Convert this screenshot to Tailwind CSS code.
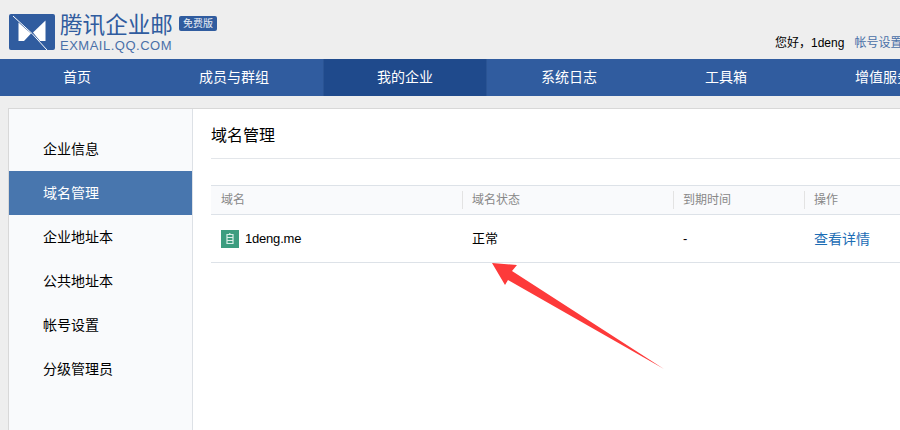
<!DOCTYPE html>
<html lang="zh">
<head>
<meta charset="utf-8">
<script src="https://cdn.jsdelivr.net/npm/@tailwindcss/browser@4"></script>
</head>
<body class="relative w-[900px] h-[430px] overflow-hidden bg-[#eeeeee] font-['Liberation_Sans','Noto_Sans_CJK_SC',sans-serif] text-black">
<header class="h-[59px] flex justify-between relative">
  <div class="flex pl-[9px] pt-[14px] items-start">
    <svg width="46" height="36" viewBox="0 0 46 36" class="shrink-0">
      <rect width="46" height="36" rx="2" fill="#305c9f"/>
      <path d="M9.500 8.500 L22 19.500 L15 27 L9.500 27 Z" fill="#fff"/>
      <path d="M36.500 6.500 L36.500 27 L31 27 L24 18.500 Z" fill="#fff"/>
      <path d="M4 2 L23 19.500 L38 36" fill="none" stroke="#fff" stroke-width="1"/>
    </svg>
    <div class="ml-[5px] flex flex-col -mt-[2px]">
      <div class="text-[#305c9f] text-[22.600px] leading-[27px] font-normal whitespace-nowrap">腾讯企业邮</div>
      <div class="text-[#4a70a8] text-[13px] leading-[14px] tracking-[0.5px] whitespace-nowrap">EXMAIL.QQ.COM</div>
    </div>
    <div class="ml-[6px] mt-[2px] w-[38px] h-[15px] rounded-[2px] bg-[#305c9f] text-[#e8eef6] text-[10px] leading-[15px] text-center whitespace-nowrap">免费版</div>
  </div>
  <div class="absolute left-[775px] top-[35px] text-[12px] leading-[16px] whitespace-nowrap flex">
    <span>您好，1deng</span><span class="ml-[10px] text-[#4a70a8]">帐号设置</span>
  </div>
</header>
<nav class="h-[37px] bg-[#305c9f] flex pl-[9px] text-white text-[14px] leading-[37px] whitespace-nowrap">
  <a class="px-[54px]">首页</a>
  <a class="px-[54px]">成员与群组</a>
  <a class="px-[53px] bg-[#1f4a8c] border-x border-[#2a5494]">我的企业</a>
  <a class="px-[54px]">系统日志</a>
  <a class="px-[54px]">工具箱</a>
  <a class="px-[54px]">增值服务</a>
</nav>
<main class="mt-[12px] ml-[8px] w-[900px] h-[330px] flex bg-white border border-[#d8d8d8]">
  <aside class="w-[184px] shrink-0 bg-[#f9fafc] border-r border-[#dde1e6] pt-[18px] text-[14px] leading-[44px]">
    <div class="pl-[34px] h-[44px]">企业信息</div>
    <div class="pl-[34px] h-[44px] bg-[#4876ae] text-white">域名管理</div>
    <div class="pl-[34px] h-[44px]">企业地址本</div>
    <div class="pl-[34px] h-[44px]">公共地址本</div>
    <div class="pl-[34px] h-[44px]">帐号设置</div>
    <div class="pl-[34px] h-[44px]">分级管理员</div>
  </aside>
  <section class="flex-1 pl-[18px]">
    <h1 class="h-[50px] border-b border-[#e3e6ea] text-[16px] leading-[54px] font-normal">域名管理</h1>
    <div class="mt-[26px] grid grid-cols-[251px_211px_131px_200px] h-[30px] bg-[#f9fafc] border-y border-[#dde2e8] text-[12px] text-[#888888] items-center">
      <div class="pl-[10px] leading-[18px]">域名</div>
      <div class="pl-[9px] leading-[18px] border-l border-[#e3e3e3]">域名状态</div>
      <div class="pl-[9px] leading-[18px] border-l border-[#e3e3e3]">到期时间</div>
      <div class="pl-[9px] leading-[18px] border-l border-[#e3e3e3]">操作</div>
    </div>
    <div class="grid grid-cols-[251px_211px_131px_200px] h-[48px] border-b border-[#dde2e8] text-[13px] items-center">
      <div class="pl-[10px] flex items-center">
        <span class="w-[18px] h-[18px] bg-[#3d9d80] flex items-center justify-center">
          <svg width="10" height="12" viewBox="0 0 10 12"><path d="M2 1.500H8V10.500H2ZM2 4.500H8M2 7.500H8M5 0L4.500 1.500" fill="none" stroke="#d9efe8" stroke-width="1.200"/></svg>
        </span>
        <span class="ml-[6px] pt-[1px] tracking-[-0.2px]">1deng.me</span>
      </div>
      <div class="pl-[10px]">正常</div>
      <div class="pl-[10px]">-</div>
      <div class="pl-[10px] pt-[1px] text-[14px] text-[#1c6db5]">查看详情</div>
    </div>
  </section>
</main>
<svg class="absolute left-0 top-0 pointer-events-none" width="900" height="430" viewBox="0 0 900 430">
  <path d="M492 263 L517 265 L512 271 L664 369 L508 280 L505 285 Z" fill="#fd3a3a"/>
</svg>
</body>
</html>
